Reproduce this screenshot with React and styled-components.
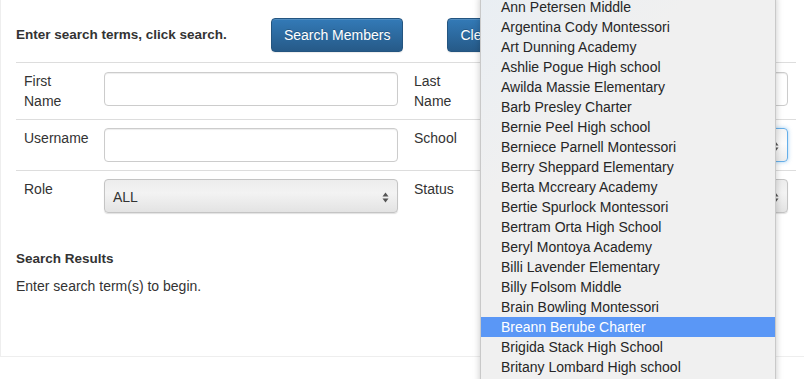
import React from 'react'
import styled, { createGlobalStyle } from 'styled-components'

const GlobalStyle = createGlobalStyle`
  html, body {
    margin: 0;
    padding: 0;
    background: #fff;
    overflow: hidden;
  }
  body {
    font-family: "Liberation Sans", Arial, Helvetica, sans-serif;
    font-size: 14px;
    color: #333;
  }
`

const Page = styled.div`
  position: relative;
  width: 804px;
  height: 379px;
  overflow: hidden;
`

const Panel = styled.div`
  width: 780px;
  padding: 0 15px 60px;
  border: 1px solid #eee;
  border-top: none;
`

const Header = styled.div`
  display: flex;
  align-items: center;
  gap: 44px;
  padding: 18px 0 10px;
`

const Intro = styled.div`
  font-weight: bold;
  font-size: 13.5px;
  line-height: 20px;
`

const Btn = styled.button`
  height: 34px;
  padding: 0 12px;
  font-family: inherit;
  font-size: 14px;
  color: #fff;
  border: 1px solid #245580;
  border-radius: 4px;
  background-image: linear-gradient(to bottom, #337ab7 0, #265a88 100%);
  text-shadow: 0 -1px 0 rgba(0, 0, 0, 0.2);
  box-shadow: inset 0 1px 0 rgba(255, 255, 255, 0.15), 0 1px 1px rgba(0, 0, 0, 0.075);
`

const Row = styled.div`
  display: grid;
  grid-template-columns: 80px 1fr 80px 1fr;
  border-top: 1px solid #ddd;
`

const Cell = styled.div`
  padding: 8px;
  line-height: 20px;
`

const Label = styled(Cell)`
  width: 64px;
`

const TextInput = styled.input`
  box-sizing: border-box;
  width: 100%;
  height: 34px;
  margin-top: ${p => p.$nudge || 0}px;
  display: block;
  border: 1px solid #ccc;
  border-radius: 4px;
  background: #fff;
  box-shadow: inset 0 1px 1px rgba(0, 0, 0, 0.075);
`

const SelectBox = styled.div`
  box-sizing: border-box;
  height: 34px;
  display: flex;
  align-items: center;
  justify-content: space-between;
  padding: 2px 8px 0 8px;
  border: 1px solid ${p => (p.$focus ? '#66afe9' : '#c4c4c4')};
  border-radius: 4px;
  background: ${p =>
    p.$focus
      ? 'linear-gradient(to bottom, #f4f4f4 0%, #fbfbfb 45%, #ececec 100%)'
      : 'linear-gradient(to bottom, #ececec 0%, #f3f3f3 40%, #e3e3e3 100%)'};
  box-shadow: ${p =>
    p.$focus ? '0 0 4px rgba(102, 175, 233, 0.6)' : '0 1px 1px rgba(0, 0, 0, 0.12)'};
  font-size: 14px;
  color: #333;
`

const Arrows = () => (
  <svg width="7" height="11" viewBox="0 0 7 11">
    <path d="M3.5 0.5 L6.5 4.5 L0.5 4.5 Z" fill="#555" />
    <path d="M3.5 10.5 L6.5 6.5 L0.5 6.5 Z" fill="#555" />
  </svg>
)

const Results = styled.div`
  margin-top: 28px;
`

const ResultsTitle = styled.h4`
  margin: 0 0 7px;
  font-size: 13.5px;
  font-weight: bold;
  line-height: 20px;
`

const ResultsText = styled.p`
  margin: 0;
  line-height: 20px;
`

const Dropdown = styled.ul`
  position: absolute;
  left: 480px;
  top: -4px;
  width: 294px;
  margin: 0;
  padding: 0 0 20px;
  list-style: none;
  background: linear-gradient(135deg, #e9eef3 0%, #f0f0f0 30%, #f0f0f0 100%);
  border: 1px solid #c9c9c9;
  box-shadow: 0 0 7px rgba(0, 0, 0, 0.22);
`

const Option = styled.li`
  height: 20px;
  line-height: 20px;
  padding-left: 20px;
  font-size: 14px;
  color: ${p => (p.$active ? '#fff' : '#262626')};
  background: ${p => (p.$active ? '#5a97f6' : 'transparent')};
`

const schools = [
  'Ann Petersen Middle',
  'Argentina Cody Montessori',
  'Art Dunning Academy',
  'Ashlie Pogue High school',
  'Awilda Massie Elementary',
  'Barb Presley Charter',
  'Bernie Peel High school',
  'Berniece Parnell Montessori',
  'Berry Sheppard Elementary',
  'Berta Mccreary Academy',
  'Bertie Spurlock Montessori',
  'Bertram Orta High School',
  'Beryl Montoya Academy',
  'Billi Lavender Elementary',
  'Billy Folsom Middle',
  'Brain Bowling Montessori',
  'Breann Berube Charter',
  'Brigida Stack High School',
  'Britany Lombard High school',
]

const App = () => {
  return (
    <Page>
      <GlobalStyle />
      <Panel>
        <Header>
          <Intro>Enter search terms, click search.</Intro>
          <Btn>Search Members</Btn>
          <Btn>Clear</Btn>
        </Header>

        <Row>
          <Label>First Name</Label>
          <Cell><TextInput $nudge={1} /></Cell>
          <Label>Last Name</Label>
          <Cell><TextInput $nudge={1} /></Cell>
        </Row>
        <Row>
          <Label>Username</Label>
          <Cell><TextInput /></Cell>
          <Label>School</Label>
          <Cell>
            <SelectBox $focus>
              <span></span>
              <Arrows />
            </SelectBox>
          </Cell>
        </Row>
        <Row>
          <Label>Role</Label>
          <Cell>
            <SelectBox>
              <span>ALL</span>
              <Arrows />
            </SelectBox>
          </Cell>
          <Label>Status</Label>
          <Cell>
            <SelectBox>
              <span></span>
              <Arrows />
            </SelectBox>
          </Cell>
        </Row>

        <Results>
          <ResultsTitle>Search Results</ResultsTitle>
          <ResultsText>Enter search term(s) to begin.</ResultsText>
        </Results>
      </Panel>

      <Dropdown>
        {schools.map(name => (
          <Option key={name} $active={name === 'Breann Berube Charter'}>
            {name}
          </Option>
        ))}
      </Dropdown>
    </Page>
  )
}

export default App
